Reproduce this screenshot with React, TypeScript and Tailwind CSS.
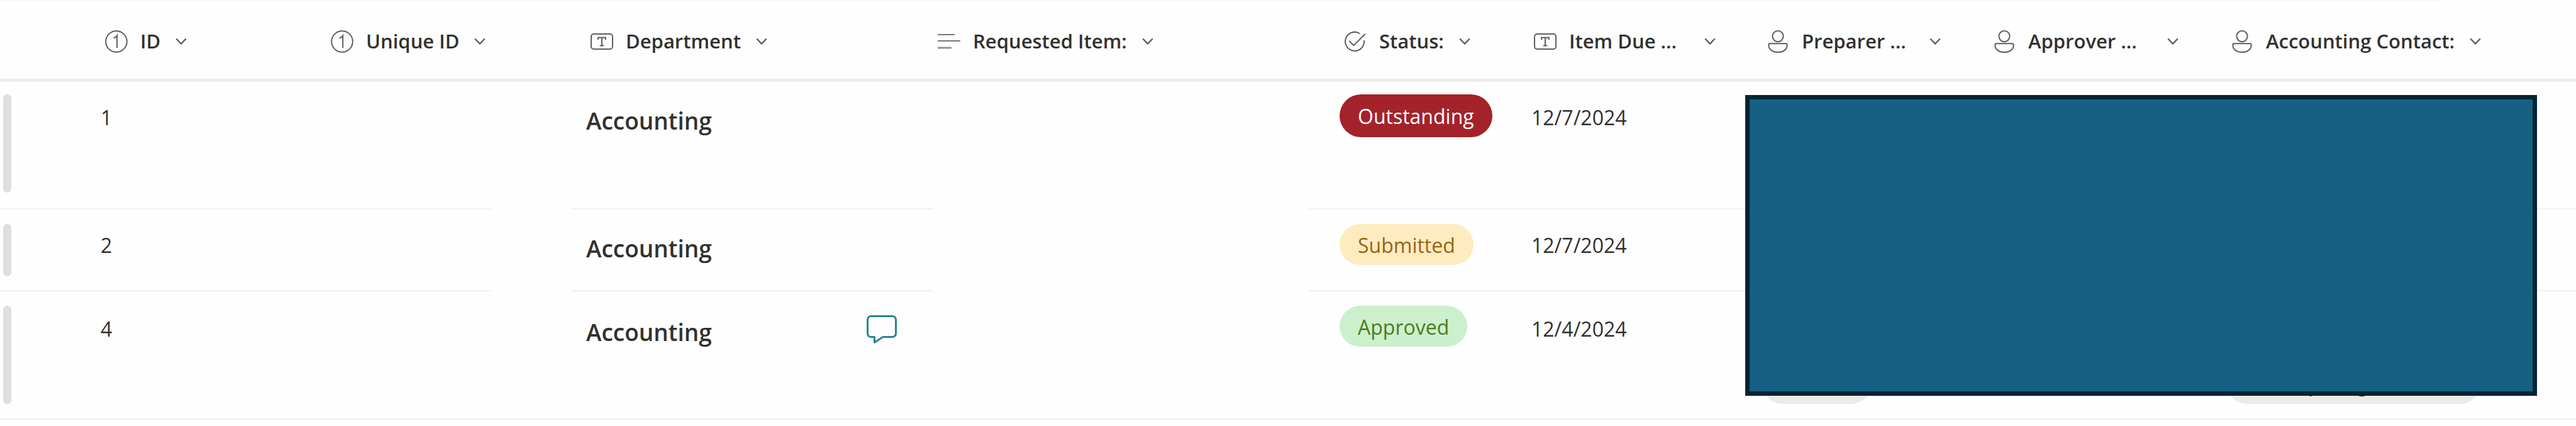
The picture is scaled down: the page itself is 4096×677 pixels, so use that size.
import type { ReactNode } from "react";

function NumberIcon() {
  return (
    <svg viewBox="0 0 36 36" className="h-9 w-9 shrink-0" fill="none" stroke="#605e5c" strokeWidth="2" aria-hidden="true">
      <circle cx="18" cy="18" r="16.8" />
      <path d="M13.5 12.5c2.6-.6 4.6-2 5.6-3.8V28" />
    </svg>
  );
}

function TextIcon() {
  return (
    <svg viewBox="0 0 36 36" className="h-9 w-9 shrink-0" fill="none" stroke="#605e5c" strokeWidth="2" aria-hidden="true">
      <rect x="1" y="6" width="34" height="24" rx="4" />
      <path d="M12 15v-3.2h12V15M18 12v12.4M14.8 24.6h6.4" />
    </svg>
  );
}

function LinesIcon() {
  return (
    <svg viewBox="0 0 36 36" className="h-9 w-9 shrink-0" fill="none" stroke="#7a7876" strokeWidth="2" aria-hidden="true">
      <path d="M0 7h27M0 17h36" />
      <path d="M0 28h22" strokeWidth="3" stroke="#979593" />
    </svg>
  );
}

function CheckIcon() {
  return (
    <svg viewBox="0 0 36 36" className="h-9 w-9 shrink-0" fill="none" stroke="#605e5c" strokeWidth="2" aria-hidden="true">
      <path d="M25.400 5.500A15 15 0 1 0 31.900 16" />
      <path d="M8.300 17l7.200 7.200L33.700 6" />
    </svg>
  );
}

function PersonIcon() {
  return (
    <svg viewBox="0 0 36 36" className="h-9 w-9 shrink-0" fill="none" stroke="#605e5c" strokeWidth="2" aria-hidden="true">
      <circle cx="18" cy="9.600" r="8.600" />
      <path d="M5.500 21.200h25c1.400 0 2.200.9 2.200 2.200C32.700 30.500 26.500 35 18 35S3.300 30.500 3.300 23.400c0-1.300.8-2.200 2.200-2.200z" />
    </svg>
  );
}

function Chevron() {
  return (
    <svg viewBox="0 0 18 12" className="h-3 w-[18px] shrink-0" fill="none" stroke="#605e5c" strokeWidth="2.400" aria-hidden="true">
      <path d="M1.200 1.500L9 9.600l7.800-8.100" />
    </svg>
  );
}

function CommentIcon() {
  return (
    <svg viewBox="0 0 48 45" className="h-[45px] w-12" fill="none" stroke="#2a8593" strokeWidth="3" strokeLinejoin="round" aria-hidden="true">
      <path d="M7 1.500h34a5.500 5.500 0 0 1 5.500 5.500v22a5.500 5.500 0 0 1-5.500 5.500H26L12.500 43.300V34.500H7A5.500 5.500 0 0 1 1.500 29V7A5.500 5.500 0 0 1 7 1.500z" />
    </svg>
  );
}

type Column = { label: string; icon: ReactNode; pad: string; labelWidth: string };

const idColumns: Column[] = [
  { label: "ID", icon: <NumberIcon />, pad: "pl-[7px]", labelWidth: "" },
  { label: "Unique ID", icon: <NumberIcon />, pad: "pl-[7px]", labelWidth: "" },
];

const detailColumns: Column[] = [
  { label: "Department", icon: <TextIcon />, pad: "pl-[30px]", labelWidth: "" },
  { label: "Requested Item:", icon: <LinesIcon />, pad: "pl-[7px]", labelWidth: "" },
  { label: "Status:", icon: <CheckIcon />, pad: "pl-[56px]", labelWidth: "" },
  { label: "Item Due ...", icon: <TextIcon />, pad: "pl-[7px]", labelWidth: "w-[191px]" },
  { label: "Preparer ...", icon: <PersonIcon />, pad: "pl-[7px]", labelWidth: "w-[179px]" },
  { label: "Approver ...", icon: <PersonIcon />, pad: "pl-[7px]", labelWidth: "w-[197px]" },
  { label: "Accounting Contact:", icon: <PersonIcon />, pad: "pl-[7px]", labelWidth: "" },
];

function HeaderCell({ label, icon, pad, labelWidth }: Column) {
  return (
    <th scope="col" className={`border-b-[5px] border-[#edebe9] p-0 pt-1 text-left text-[31px] font-semibold ${pad}`}>
      <button type="button" className="flex items-center whitespace-nowrap">
        {icon}
        <span className={`ml-5 mr-6 text-left ${labelWidth}`}>{label}</span>
        <Chevron />
      </button>
    </th>
  );
}

type Row = {
  id: string;
  date: string;
  status: string;
  pill: string;
  rowPad: string;
  bar: string;
  line: string;
  nameLine: string;
  comment?: boolean;
  people?: boolean;
};

const rows: Row[] = [
  {
    id: "1",
    date: "12/7/2024",
    status: "Outstanding",
    pill: "h-[68px] bg-[#a4232b] text-white",
    rowPad: "pt-5 pb-[25px]",
    bar: "h-[156px]",
    line: "leading-[74px]",
    nameLine: "leading-[84px]",
  },
  {
    id: "2",
    date: "12/7/2024",
    status: "Submitted",
    pill: "h-[65px] bg-[#ffebc0] text-[#986414]",
    rowPad: "pt-[23px] pb-[22px]",
    bar: "h-[83px]",
    line: "leading-[68px]",
    nameLine: "leading-[78px]",
  },
  {
    id: "4",
    date: "12/4/2024",
    status: "Approved",
    pill: "h-[65px] bg-[#caf0cc] text-[#4f7a1f]",
    rowPad: "pt-[23px] pb-[23px]",
    bar: "h-[156px]",
    line: "leading-[74px]",
    nameLine: "leading-[84px]",
    comment: true,
    people: true,
  },
];

export default function App() {
  return (
    <main className="relative min-h-screen bg-[#fefefe] font-['Open_Sans','Noto_Sans',sans-serif] text-[32px] text-[#323130]">
      <div className="h-[2px] w-[94.75%] bg-[#f8f8f8]" />
      <table className="w-full table-fixed border-separate border-spacing-0">
        <colgroup>
          <col className="w-[160px]" />
          <col className="w-[359px]" />
          <col className="w-[261px]" />
          <col className="w-[129px]" />
          <col className="w-[575px]" />
          <col className="w-[597px]" />
          <col className="w-[351px]" />
          <col className="w-[370px]" />
          <col className="w-[360px]" />
          <col className="w-[378px]" />
          <col />
        </colgroup>
        <thead>
          <tr className="h-32">
            <td className="border-b-[5px] border-[#edebe9]" />
            {idColumns.map((c) => (
              <HeaderCell key={c.label} {...c} />
            ))}
            <td className="border-b-[5px] border-[#edebe9]" />
            {detailColumns.map((c) => (
              <HeaderCell key={c.label} {...c} />
            ))}
          </tr>
        </thead>
        <tbody>
          {rows.map((r, i) => {
            const cell = `border-b-2 border-[#f1f0ef] align-top ${r.rowPad}`;
            const blank = `border-b-2 align-top ${r.rowPad} ${i === rows.length - 1 ? "border-[#f1f0ef]" : "border-transparent"}`;
            const person = `border-b-2 border-[#f1f0ef] align-bottom ${r.people ? "pb-[23px]" : ""}`;
            return (
              <tr key={r.id}>
                <td className={`pl-[5px] ${cell}`}>
                  <div className={`w-[13px] rounded-md bg-[#e1dfdd] ${r.bar}`} />
                </td>
                <td className={`${cell} ${r.line}`}>{r.id}</td>
                <td className={cell} />
                <td className={blank} />
                <td className={`pl-[23px] pr-[58px] ${cell}`}>
                  <div className="flex items-start justify-between">
                    <span className={`text-[37px] font-semibold ${r.nameLine}`}>Accounting</span>
                    {r.comment && (
                      <button type="button" aria-label="Comments" className="pt-[15px]">
                        <CommentIcon />
                      </button>
                    )}
                  </div>
                </td>
                <td className={blank} />
                <td className={`pl-[49px] ${cell}`}>
                  <span className={`flex w-fit items-center rounded-full px-[29px] pt-[2px] ${r.pill}`}>{r.status}</span>
                </td>
                <td className={`pl-[3px] ${cell} ${r.line}`}>{r.date}</td>
                <td className={person}>
                  {r.people && <div className="h-[65px] w-[174px] rounded-full bg-[#edebe9]" />}
                </td>
                <td className={cell} />
                <td className={person}>
                  {r.people && (
                    <div className="flex h-[65px] w-[404px] items-center gap-[58px] rounded-full bg-[#edebe9] pl-[130px]">
                      <span>p</span>
                      <span>g</span>
                    </div>
                  )}
                </td>
              </tr>
            );
          })}
        </tbody>
      </table>
      <div className="absolute top-[151px] right-[62px] bottom-[48px] left-[2775px] border-[7px] border-[#042433] bg-[#156082]" />
    </main>
  );
}
